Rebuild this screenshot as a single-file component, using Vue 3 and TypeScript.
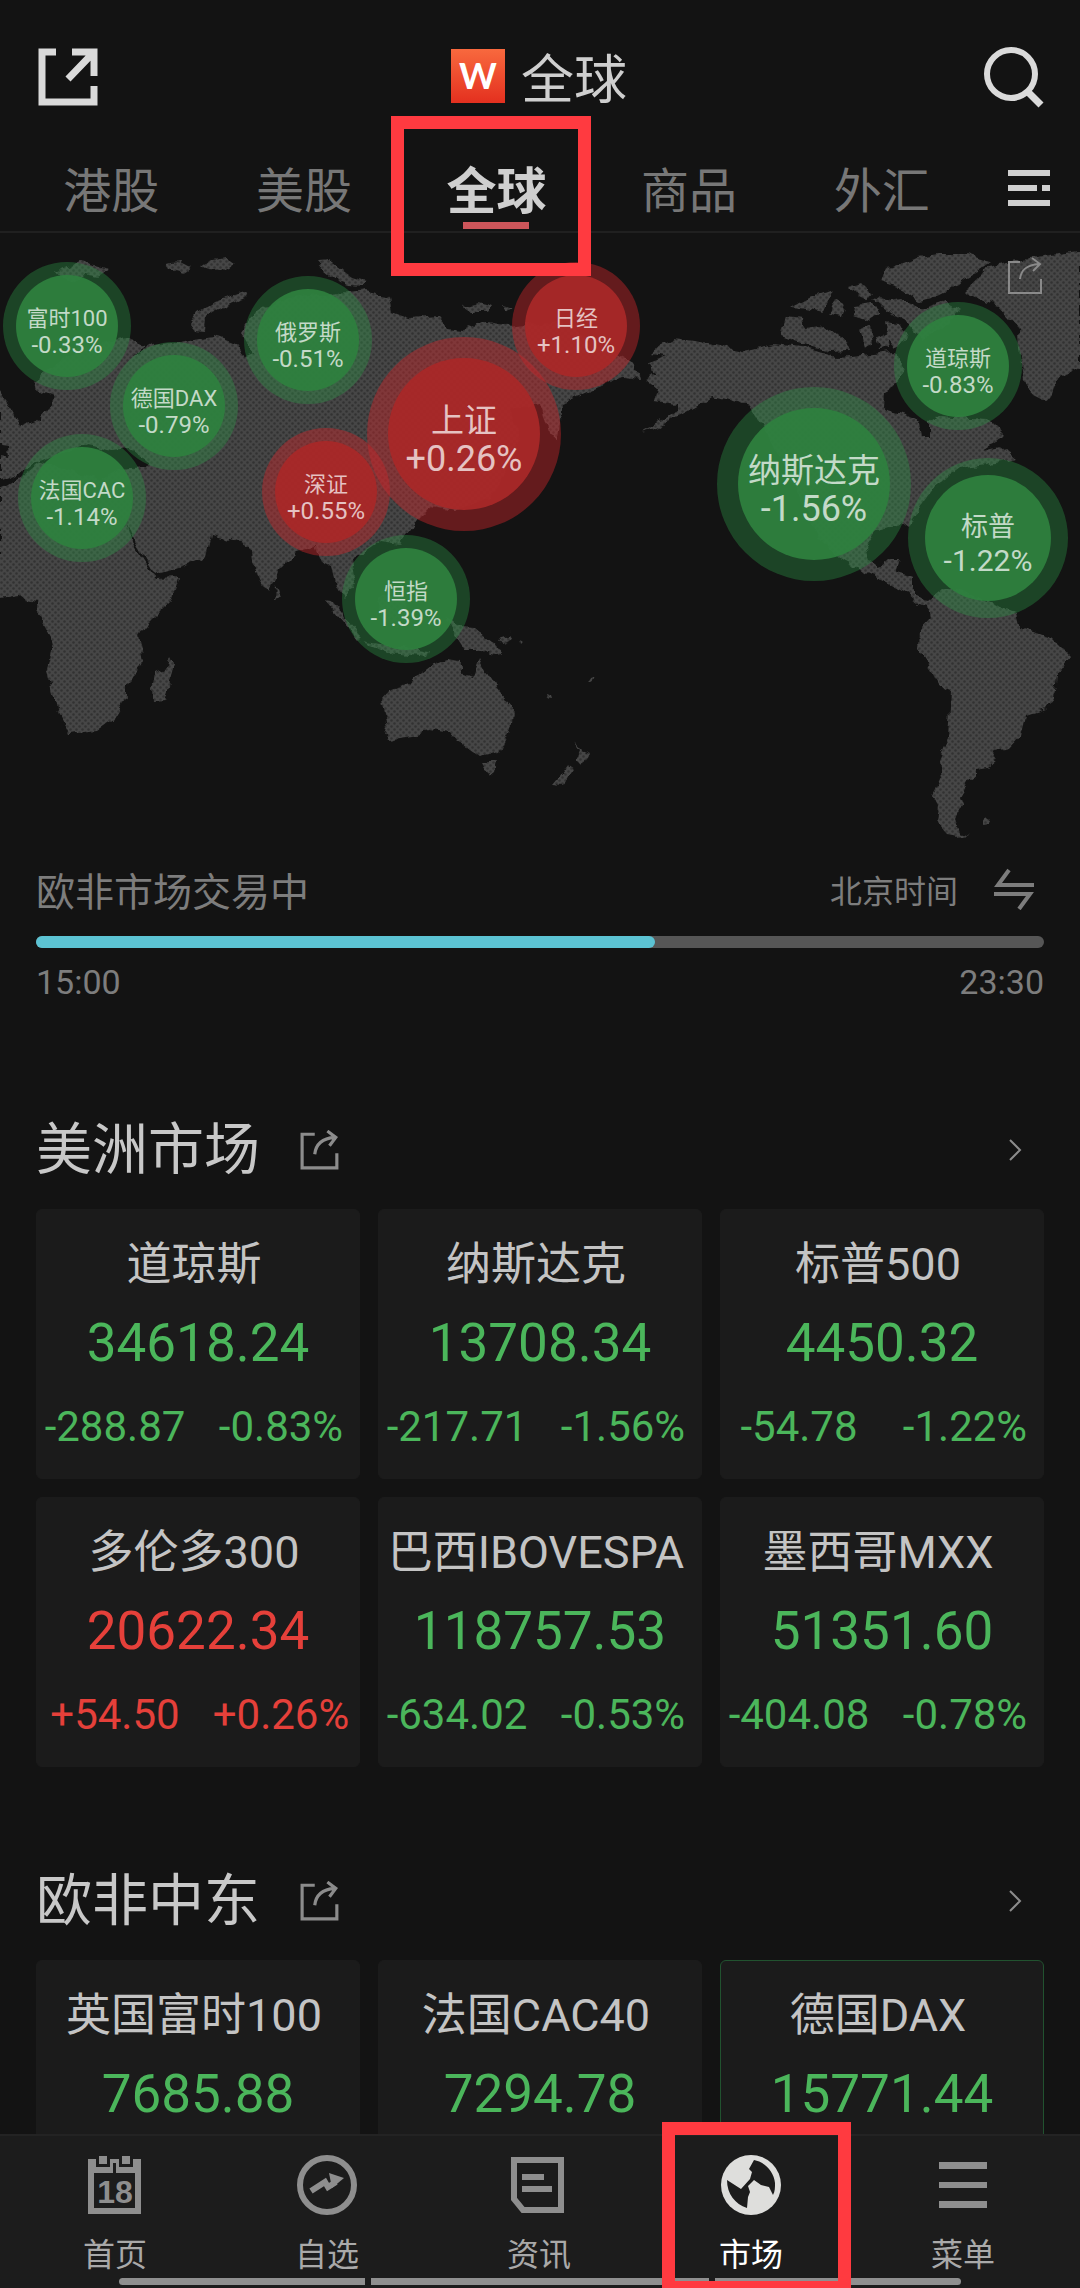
<script setup lang="ts">
import { ref } from 'vue'

type Trend = 'up' | 'down'
interface Bubble { name: string; pct: string; x: number; y: number; size: 's' | 'm' | 'l'; trend: Trend }
interface Quote { name: string; value: string; change?: string; pct?: string; trend: Trend; flash?: boolean }
interface Market { title: string; quotes: Quote[] }

const MAP_TOP = 234
const MAP_W = 1080
const MAP_H = 626

const tabs = ['港股', '美股', '全球', '商品', '外汇']
const activeTab = ref('全球')

const bubbles: Bubble[] = [
  { name: '富时100', pct: '-0.33%', x: 67, y: 327, size: 's', trend: 'down' },
  { name: '德国DAX', pct: '-0.79%', x: 174, y: 407, size: 's', trend: 'down' },
  { name: '法国CAC', pct: '-1.14%', x: 82, y: 499, size: 's', trend: 'down' },
  { name: '俄罗斯', pct: '-0.51%', x: 308, y: 341, size: 's', trend: 'down' },
  { name: '日经', pct: '+1.10%', x: 576, y: 327, size: 's', trend: 'up' },
  { name: '深证', pct: '+0.55%', x: 326, y: 493, size: 's', trend: 'up' },
  { name: '上证', pct: '+0.26%', x: 464, y: 435, size: 'l', trend: 'up' },
  { name: '恒指', pct: '-1.39%', x: 406, y: 600, size: 's', trend: 'down' },
  { name: '道琼斯', pct: '-0.83%', x: 958, y: 367, size: 's', trend: 'down' },
  { name: '纳斯达克', pct: '-1.56%', x: 814, y: 485, size: 'l', trend: 'down' },
  { name: '标普', pct: '-1.22%', x: 988, y: 539, size: 'm', trend: 'down' },
]

const place = (b: Bubble) => ({
  left: `${(b.x / MAP_W) * 100}%`,
  top: `${((b.y - MAP_TOP) / MAP_H) * 100}%`,
})

const land: string[] = [
  // Europe, Asia and Africa
  'M0 393L12 412 21 428 38 421 50 408 54 398 41 393 33 383 45 373 80 350 127 338 146 347 130 358 152 346 179 343 213 337 238 347 244 358 255 355 241 333 251 318 280 300 348 293 366 291 389 298 392 313 410 320 437 318 448 330 461 332 482 323 506 327 560 322 600 345 635 365 640 380 622 378 604 386 580 396 562 404 558 440 548 435 540 405 510 410 520 440 505 475 490 500 455 512 430 508 418 520 400 545 380 542 364 553 352 560 356 585 345 600 336 587 331 567 322 563 316 548 296 553 279 570 275 583 268 593 262 583 251 560 249 548 238 543 212 536 207 557 182 567 155 575 148 563 136 543 127 523 133 543 152 573 157 579 179 578 172 600 145 627 139 637 144 663 138 673 126 685 126 700 114 720 98 732 69 735 57 710 46 673 52 650 50 637 39 617 38 602 26 600 21 596 0 599V490L24 476 40 463 60 468 100 480 118 470 146 468 150 462 130 450 112 452 88 446 50 458 30 466 18 476 0 482V456L9 458 8 447 0 446Z',
  'M190 325L197 313 215 302 245 293 247 298 225 308 205 318 204 333 195 332Z',
  'M55 272L79 262 110 270 98 278 84 275 78 283 62 280Z',
  'M165 265L180 263 190 268 183 273 168 269Z',
  'M200 268L212 259 226 257 236 264 222 272 208 271Z',
  'M317 263L330 262 341 270 352 278 368 283 362 288 348 287 338 282 325 272Z',
  'M463 307L478 303 492 307 488 313 468 313Z M502 306L512 309 506 313Z',
  // Islands of the Indian Ocean and South-East Asia
  'M170 657L175 667 165 702 153 703 152 690 155 673 167 668Z',
  'M275 587L281 598 274 600Z',
  'M325 601L332 602 362 637 358 641 344 624Z',
  'M360 642L400 648 430 653 428 658 390 654Z',
  'M378 600L400 590 408 606 398 628 382 622Z',
  'M445 618L458 627 475 628 492 642 503 655 495 656 482 652 465 652 455 636Z',
  'M498 640L512 636 508 628 514 640 502 645Z',
  // Australia and New Zealand
  'M382 700L389 692 410 685 417 677 430 667 448 660 460 662 460 674 472 678 479 658 486 672 496 687 513 707 512 727 499 753 480 757 458 742 451 733 430 730 413 737 389 741 386 736 388 728Z',
  'M482 763L496 763 494 772 489 776Z',
  'M572 741L582 752 590 755 581 767 576 762 580 752Z',
  'M569 765L575 769 562 788 552 787 562 775Z',
  'M547 693l5 2 1 3-5-1z M588 683l4-2 2-4-3 1z M520 641l3 2-2 2z M982 820l4-3 4 4-2 4-6 1z',
  // Americas
  'M650 355L659 347 674 339 695 342 743 352 774 345 802 348 836 358 850 357 895 353 905 370 895 387 884 393 883 410 905 416 919 422 922 437 929 437 929 423 939 417 988 420 1005 437 984 450 1000 446 1017 460 985 466 960 470 935 488 915 516 908 530 900 524 877 530 865 548 869 564 879 568 888 560 900 560 896 573 914 578 914 597 929 601 943 590 957 590 1015 613 1019 628 1053 640 1070 657 1056 677 1053 700 1046 710 1025 717 1020 737 1008 750 993 753 997 760 988 768 976 770 976 777 969 782 960 797 963 805 955 820 960 833 970 836 957 838 948 836 936 823 938 807 933 797 941 780 939 760 948 740 951 693 939 687 929 667 919 650 920 630 931 618 929 607 919 605 905 593 884 582 864 573 842 562 820 540 800 500 770 440 750 407 712 398 705 403 688 412 660 427 642 433 654 425 678 412 678 405 654 402 657 390 645 380 657 375 650 370 647 365 667 357Z',
  'M781 337L786 318 802 320 805 330 826 327 846 343 850 352 829 353 809 347Z',
  'M791 308L809 298 833 290 828 300 822 314 806 310Z',
  'M836 300L846 306 842 318 830 316Z M850 288L862 284 872 294 866 302 858 298Z M855 306L872 304 880 312 866 322 854 318Z M858 330L870 326 874 346 864 350Z M876 340L888 334 890 348 880 350Z',
  'M884 268L895 267 917 258 939 255 967 255 991 263 978 272 964 280 950 290 936 297 919 302 902 290 879 283Z',
  'M872 298L890 302 900 300 922 310 946 302 960 312 940 330 922 340 906 322 890 314Z M884 322L900 324 908 340 896 348 888 338Z',
  'M964 293L981 277 988 267 1022 260 1080 252V368L1057 380 1052 395 1046 403 1032 396 1024 380 1020 350 1019 330 998 307Z',
]

const markets: Market[] = [
  {
    title: '美洲市场',
    quotes: [
      { name: '道琼斯', value: '34618.24', change: '-288.87', pct: '-0.83%', trend: 'down' },
      { name: '纳斯达克', value: '13708.34', change: '-217.71', pct: '-1.56%', trend: 'down' },
      { name: '标普500', value: '4450.32', change: '-54.78', pct: '-1.22%', trend: 'down' },
      { name: '多伦多300', value: '20622.34', change: '+54.50', pct: '+0.26%', trend: 'up' },
      { name: '巴西IBOVESPA', value: '118757.53', change: '-634.02', pct: '-0.53%', trend: 'down' },
      { name: '墨西哥MXX', value: '51351.60', change: '-404.08', pct: '-0.78%', trend: 'down' },
    ],
  },
  {
    title: '欧非中东',
    quotes: [
      { name: '英国富时100', value: '7685.88', trend: 'down' },
      { name: '法国CAC40', value: '7294.78', trend: 'down' },
      { name: '德国DAX', value: '15771.44', trend: 'down', flash: true },
    ],
  },
]

const sessionProgress = 61.4
</script>

<template>
  <div class="app">
    <header class="top">
      <button class="icon-btn" aria-label="分享">
        <svg width="60" height="58" viewBox="0 0 60 58" fill="none" stroke="currentColor" stroke-width="7">
          <path d="M18 4H4v50h52V38" />
          <path d="M34 4h22v24M55 5L30 31" />
        </svg>
      </button>
      <h1 class="title"><span class="logo">W</span>全球</h1>
      <button class="icon-btn" aria-label="搜索">
        <svg width="62" height="62" viewBox="0 0 62 62" fill="none" stroke="currentColor" stroke-width="6">
          <circle cx="29" cy="28" r="24" />
          <path d="M45 45l14 14" stroke-width="7" />
        </svg>
      </button>
    </header>

    <nav class="tabs">
      <div v-for="t in tabs" :key="t" class="tab-cell">
        <button class="tab" :class="{ active: t === activeTab }" @click="activeTab = t">{{ t }}</button>
        <span v-if="t === activeTab" class="mark" aria-hidden="true"></span>
      </div>
      <button class="icon-btn tab-menu" aria-label="栏目管理">
        <svg width="42" height="38" viewBox="0 0 42 38" fill="currentColor">
          <path d="M0 1h42v6H0zM0 16h29v6H0zM34 16h8v6h-8zM0 31h42v6H0z" />
        </svg>
      </button>
    </nav>

    <main class="content">
      <section class="map">
        <svg class="world" :viewBox="`0 ${MAP_TOP} ${MAP_W} ${MAP_H}`" aria-hidden="true">
          <defs>
            <pattern id="dots" width="6" height="6" patternUnits="userSpaceOnUse">
              <rect width="6" height="6" fill="#464646" />
              <circle cx="1.5" cy="1.5" r="1.3" fill="#323232" />
              <circle cx="4.5" cy="4.5" r="1.3" fill="#323232" />
            </pattern>
            <filter id="coast" x="0" y="0" width="1" height="1">
              <feTurbulence type="fractalNoise" baseFrequency="0.09" numOctaves="2" seed="4" result="n" />
              <feDisplacementMap in="SourceGraphic" in2="n" scale="9" xChannelSelector="R" yChannelSelector="G" />
            </filter>
            <mask id="land">
              <g filter="url(#coast)" fill="#fff">
                <rect x="0" y="234" width="1080" height="626" fill="#000" />
                <path v-for="(d, i) in land" :key="i" :d="d" />
              </g>
            </mask>
          </defs>
          <rect x="0" y="234" width="1080" height="626" fill="url(#dots)" mask="url(#land)" />
        </svg>
        <a
          v-for="b in bubbles"
          :key="b.name"
          href="#"
          class="bubble"
          :class="[b.size, b.trend]"
          :style="place(b)"
        >
          <span class="core"><span>{{ b.name }}</span><span class="bubble-pct">{{ b.pct }}</span></span>
        </a>
        <button class="icon-btn map-share" aria-label="分享地图">
          <svg width="38" height="38" viewBox="0 0 38 38" fill="none" stroke="currentColor" stroke-width="2">
            <path d="M14 5H3v31h32V22M14 22c1-9 6-14 19-15M26 1l8 6-7 7" />
          </svg>
        </button>
      </section>

      <section class="session">
        <div class="session-row">
          <h2 class="session-name">欧非市场交易中</h2>
          <button class="zone">
            北京时间
            <svg width="42" height="42" viewBox="0 0 42 42" fill="none" stroke="currentColor" stroke-width="4">
              <path d="M16 2L5 17h36M1 26h36L26 41" />
            </svg>
          </button>
        </div>
        <div class="bar"><div class="bar-fill" :style="{ width: sessionProgress + '%' }"></div></div>
        <div class="hours"><span>15:00</span><span>23:30</span></div>
      </section>

      <section v-for="m in markets" :key="m.title" class="market">
        <div class="market-head">
          <h2 class="market-title">{{ m.title }}</h2>
          <button class="icon-btn head-icon" aria-label="分享">
            <svg width="40" height="40" viewBox="0 0 38 38" fill="none" stroke="currentColor" stroke-width="3">
              <path d="M14 4H2v32h33V22M14 23c1-9 6-15 19-16M26 1l8 6-6 8" />
            </svg>
          </button>
          <a href="#" class="more head-icon" aria-label="更多">
            <svg width="14" height="24" viewBox="0 0 14 24" fill="none" stroke="currentColor" stroke-width="2">
              <path d="M2 2l10 10L2 22" />
            </svg>
          </a>
        </div>
        <div class="grid">
          <article v-for="q in m.quotes" :key="q.name" class="card" :class="[q.trend, { flash: q.flash }]">
            <h3 class="name">{{ q.name }}</h3>
            <p class="value">{{ q.value }}</p>
            <p class="delta"><span>{{ q.change }}</span><span>{{ q.pct }}</span></p>
          </article>
        </div>
      </section>
    </main>

    <nav class="bottom">
      <a href="#" class="item">
        <svg width="60" height="62" viewBox="0 0 60 62" fill="currentColor">
          <path fill-rule="evenodd" d="M3 5h8v8h14V5h9v8h14V5h8v55H3zM9 19v35h41V19z" />
          <path d="M14 2h8v8h-8zM37 2h8v8h-8z" />
          <path d="M28 9h3v10h-3z" fill="#1c1c1c" />
          <text x="30" y="49" text-anchor="middle" class="day">18</text>
        </svg>
        首页
      </a>
      <a href="#" class="item">
        <svg width="60" height="62" viewBox="0 0 60 62" fill="none" stroke="currentColor">
          <circle cx="30" cy="31" r="27" stroke-width="6" />
          <path d="M14 37l14-9 3 5 8-5" stroke-width="6" />
          <path d="M32 19l15 5-12 10z" fill="currentColor" stroke="none" />
        </svg>
        自选
      </a>
      <a href="#" class="item">
        <svg width="60" height="62" viewBox="0 0 60 62" fill="none" stroke="currentColor" stroke-width="6">
          <path d="M5 6h47v50H14l-9-11z" />
          <path d="M13 23h22M13 35h30" />
        </svg>
        资讯
      </a>
      <a href="#" class="item active">
        <svg width="60" height="62" viewBox="0 0 60 62">
          <circle cx="30" cy="31" r="30" fill="#dededc" />
          <path d="M33 6c11 2 20 12 21 23 0 5 0 8-2 12l-4-8-8-2-7-5-6 6 2 6-2 5-1 11C14 50 6 40 6 26l14 9 9-10 2-7-3-3z" fill="#1c1c1c" />
        </svg>
        市场
      </a>
      <a href="#" class="item">
        <svg width="60" height="62" viewBox="0 0 60 62" fill="currentColor">
          <path d="M6 8h48v7H6zM6 28h48v6H6zM6 47h48v7H6z" />
        </svg>
        菜单
      </a>
      <div class="home-bar" aria-hidden="true"><i></i><i></i><i></i></div>
    </nav>
    <div class="frame frame-tab" aria-hidden="true"></div>
    <div class="frame frame-nav" aria-hidden="true"></div>
  </div>
</template>

<style>
html,
body {
  margin: 0;
  background: #131313;
}
</style>

<style scoped>
* {
  box-sizing: border-box;
}
.app {
  position: relative;
  display: flex;
  flex-direction: column;
  height: 100vh;
  overflow: hidden;
  background: #131313;
  color: #c8c8c8;
  font-family: 'Noto Sans CJK SC', 'Noto Sans', sans-serif;
}
.core,
.hours,
.card {
  font-family: Roboto, 'Noto Sans CJK SC', sans-serif;
}
button {
  padding: 0;
  border: 0;
  background: none;
  color: inherit;
  font: inherit;
  cursor: pointer;
}
a {
  color: inherit;
  text-decoration: none;
}
svg {
  display: block;
}
h1,
h2,
h3,
p {
  margin: 0;
  font-weight: 400;
}
.icon-btn {
  display: flex;
  align-items: center;
  justify-content: center;
}

.top {
  display: flex;
  align-items: center;
  justify-content: space-between;
  height: 154px;
  padding: 0 36px 0 38px;
  color: #dadada;
}
.title {
  display: flex;
  align-items: center;
  gap: 16px;
  padding: 0 2px 2px 0;
  font-size: 53px;
  line-height: 64px;
  color: #cfcfcf;
}
.logo {
  width: 54px;
  height: 54px;
  background: linear-gradient(#f8693e, #e4301f);
  color: #fff;
  font: 700 36px/52px Lato, sans-serif;
  text-align: center;
}

.tabs {
  display: flex;
  align-items: stretch;
  height: 79px;
  padding-left: 15px;
  border-bottom: 2px solid #202020;
}
.tab-cell {
  position: relative;
  display: flex;
  flex: 1;
  justify-content: center;
}
.tab {
  padding-bottom: 12px;
  color: #777;
  font-size: 48px;
  line-height: 60px;
}
.tab.active {
  color: #cfcfcf;
  font-size: 50px;
  font-weight: 700;
}
.mark {
  position: absolute;
  bottom: 2px;
  width: 66px;
  height: 7px;
  background: #cd555a;
}
.tab-menu {
  width: 102px;
  padding-bottom: 9px;
  color: #cfcfcf;
}

.content {
  flex: 1;
  min-height: 0;
  overflow-y: auto;
  scrollbar-width: none;
}
.map {
  position: relative;
}
.world {
  width: 100%;
  height: auto;
}
.bubble {
  position: absolute;
  display: flex;
  border-radius: 50%;
  transform: translate(-50%, -50%);
  color: rgba(255, 255, 255, 0.72);
}
.core {
  display: flex;
  flex: 1;
  flex-direction: column;
  align-items: center;
  justify-content: center;
  padding-top: 11px;
  border-radius: 50%;
  white-space: nowrap;
}
.bubble.s {
  width: 128px;
  height: 128px;
  padding: 13px;
  font-size: 22px;
  line-height: 26px;
}
.s .bubble-pct {
  font-size: 24px;
}
.bubble.m {
  width: 160px;
  height: 160px;
  padding: 17px;
  font-size: 27px;
  line-height: 33px;
}
.m .bubble-pct {
  font-size: 30px;
}
.bubble.l {
  width: 194px;
  height: 194px;
  padding: 21px;
  font-size: 33px;
  line-height: 39px;
}
.l .bubble-pct {
  font-size: 36px;
}
.bubble.down {
  background: rgba(44, 150, 70, 0.38);
}
.bubble.down .core {
  background: rgba(46, 128, 62, 0.93);
}
.bubble.up {
  background: rgba(200, 38, 42, 0.45);
}
.bubble.up .core {
  background: rgba(168, 40, 40, 0.95);
}
.map-share {
  position: absolute;
  top: 24px;
  right: 36px;
  color: #8a8a8a;
}

.session {
  padding: 0 36px;
  color: #7d7d7d;
}
.session-row {
  display: flex;
  align-items: center;
  justify-content: space-between;
  height: 60px;
}
.session-name {
  font-size: 39px;
  line-height: 60px;
}
.zone {
  display: flex;
  align-items: center;
  gap: 35px;
  padding-right: 9px;
  font-size: 32px;
  line-height: 60px;
}
.bar {
  height: 12px;
  margin-top: 17px;
  border-radius: 6px;
  background: #565656;
}
.bar-fill {
  height: 100%;
  border-radius: 6px;
  background: #5cc3d3;
}
.hours {
  display: flex;
  justify-content: space-between;
  margin: 14px 0;
  font-size: 34px;
  line-height: 40px;
}

.market {
  padding: 79px 36px 0;
}
.market-head {
  display: flex;
  align-items: center;
  height: 100px;
  margin-bottom: 14px;
  color: #8c8c8c;
}
.market-title {
  margin-right: 40px;
  color: #c8c8c8;
  font-size: 56px;
  line-height: 80px;
}
.head-icon {
  padding-top: 10px;
}
.more {
  margin-left: auto;
  padding-right: 22px;
}
.grid {
  display: grid;
  grid-template-columns: repeat(3, minmax(0, 1fr));
  gap: 18px;
}
.card {
  min-height: 270px;
  padding: 25px 0 23px;
  border: 1px solid #1b1b1b;
  border-radius: 6px;
  background: #1b1b1b;
  text-align: center;
  white-space: nowrap;
}
.card.flash {
  border-color: #21522f;
}
.card.up {
  color: #e5403a;
}
.card.down {
  color: #4bb65b;
}
.name {
  padding-right: 8px;
  color: #c4c4c4;
  font-size: 45px;
  line-height: 60px;
}
.value {
  margin-top: 16px;
  font-size: 53px;
  line-height: 64px;
}
.delta {
  display: grid;
  grid-template-columns: 1fr 1fr;
  column-gap: 10px;
  margin-top: 26px;
  font-size: 42px;
  line-height: 52px;
}

.bottom {
  position: relative;
  display: flex;
  height: 154px;
  padding: 0 11px 0 9px;
  border-top: 2px solid #232323;
  background: #1c1c1c;
}
.item {
  display: flex;
  flex: 1;
  flex-direction: column;
  align-items: center;
  gap: 14px;
  padding-top: 18px;
  color: #a9a9a9;
  font-size: 32px;
  line-height: 44px;
}
.item svg {
  color: #8e8e8e;
}
.item.active {
  color: #fff;
}
.day {
  font: 700 32px 'Liberation Sans', sans-serif;
}
.home-bar {
  position: absolute;
  right: 11%;
  bottom: 3px;
  left: 11%;
  display: grid;
  grid-template-columns: 246fr 338fr 246fr;
  gap: 6px;
}
.home-bar i {
  height: 7px;
  background: #8f8f8f;
}
.home-bar i:first-child {
  border-radius: 4px 0 0 4px;
}
.home-bar i:last-child {
  border-radius: 0 4px 4px 0;
}
.frame {
  position: absolute;
  border: 13px solid #ff3a40;
  pointer-events: none;
}
.frame-tab {
  top: 116px;
  left: calc((100% - 117px) / 2 + 15px - 106px);
  width: 200px;
  height: 160px;
}
.frame-nav {
  right: calc((100% - 20px) * 0.3 - 89px);
  bottom: -6px;
  width: 189px;
  height: 172px;
}
</style>
